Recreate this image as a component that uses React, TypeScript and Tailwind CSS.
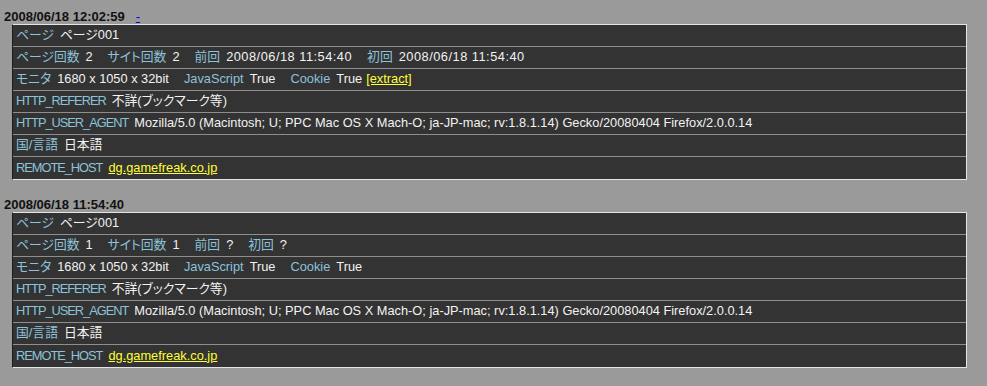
const font = {
  fontFamily: '"Liberation Sans", "Noto Sans CJK JP", sans-serif',
};

type Pair = { label: string; value?: string; link?: string };

type Entry = {
  time: string;
  showDash: boolean;
  rows: Pair[][];
};

const ua =
  "Mozilla/5.0 (Macintosh; U; PPC Mac OS X Mach-O; ja-JP-mac; rv:1.8.1.14) Gecko/20080404 Firefox/2.0.0.14";

const entries: Entry[] = [
  {
    time: "2008/06/18 12:02:59",
    showDash: true,
    rows: [
      [{ label: "ページ", value: "ページ001" }],
      [
        { label: "ページ回数", value: "2" },
        { label: "サイト回数", value: "2" },
        { label: "前回", value: "2008/06/18 11:54:40" },
        { label: "初回", value: "2008/06/18 11:54:40" },
      ],
      [
        { label: "モニタ", value: "1680 x 1050 x 32bit" },
        { label: "JavaScript", value: "True" },
        { label: "Cookie", value: "True", link: "[extract]" },
      ],
      [{ label: "HTTP_REFERER", value: "不詳(ブックマーク等)" }],
      [{ label: "HTTP_USER_AGENT", value: ua }],
      [{ label: "国/言語", value: "日本語" }],
      [{ label: "REMOTE_HOST", link: "dg.gamefreak.co.jp" }],
    ],
  },
  {
    time: "2008/06/18 11:54:40",
    showDash: false,
    rows: [
      [{ label: "ページ", value: "ページ001" }],
      [
        { label: "ページ回数", value: "1" },
        { label: "サイト回数", value: "1" },
        { label: "前回", value: "?" },
        { label: "初回", value: "?" },
      ],
      [
        { label: "モニタ", value: "1680 x 1050 x 32bit" },
        { label: "JavaScript", value: "True" },
        { label: "Cookie", value: "True" },
      ],
      [{ label: "HTTP_REFERER", value: "不詳(ブックマーク等)" }],
      [{ label: "HTTP_USER_AGENT", value: ua }],
      [{ label: "国/言語", value: "日本語" }],
      [{ label: "REMOTE_HOST", link: "dg.gamefreak.co.jp" }],
    ],
  },
];

// 大文字だけのラベル (HTTP_REFERER 等) は元の画面だと幅が狭い
const isUpper = (s: string) => /^[A-Z_]+$/.test(s);
// 日付の値は元の画面で少し広い
const isDate = (s?: string) => !!s && /^\d{4}\/\d\d\/\d\d/.test(s);

export default function App() {
  return (
    <div className="min-h-[386px] w-[987px] bg-[#9a9a9a] pb-4" style={font}>
      {entries.map((e, i) => (
        <div key={i} className={i > 0 ? "mt-[20px]" : ""}>
          {/* 日時 */}
          <div
            className={`flex items-end gap-[11px] pl-1 text-[13px] font-bold leading-none text-[#111] ${
              i === 0 ? "h-[24px] pb-[1px]" : "h-[12px] pb-[1px]"
            }`}
          >
            <span>{e.time}</span>
            {e.showDash && (
              <a href="#" className="font-normal text-[#0000ee] underline">
                -
              </a>
            )}
          </div>

          {/* 詳細テーブル */}
          <div className="ml-3 w-[955px] border border-[#e4e4e4] border-l-[#1c1c1c] bg-[#333333]">
            {e.rows.map((row, r) => (
              <div
                key={r}
                className={`flex h-[22px] items-center pl-[3px] text-[12.8px] leading-none [font-feature-settings:'palt'] ${
                  r < e.rows.length - 1 ? "border-b border-[#8e8e8e]" : ""
                }`}
              >
                {row.map((p, k) => (
                  <span key={k} className="mr-[15px] flex items-center gap-[6px] whitespace-nowrap">
                    <span
                      className={`text-[#8cc2da] ${isUpper(p.label) ? "tracking-[-1px]" : ""}`}
                    >
                      {p.label}
                    </span>
                    {p.value && (
                      <span
                        className={`text-[#f2f2f2] ${isDate(p.value) ? "tracking-[0.5px]" : ""}`}
                      >
                        {p.value}
                      </span>
                    )}
                    {p.link && (
                      <a
                        href="#"
                        className={`text-[#ffff33] underline ${p.value ? "-ml-[2px]" : ""}`}
                      >
                        {p.link}
                      </a>
                    )}
                  </span>
                ))}
              </div>
            ))}
          </div>
        </div>
      ))}
    </div>
  );
}
